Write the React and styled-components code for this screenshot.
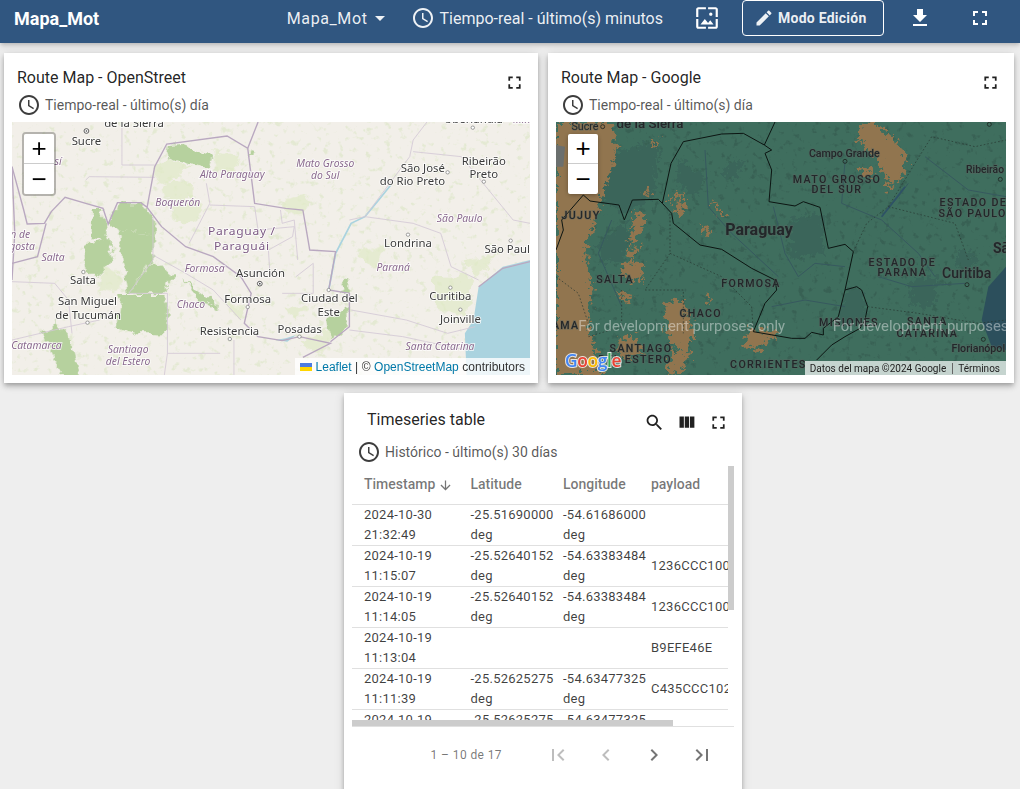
import styled, { createGlobalStyle } from "styled-components";

const GlobalStyle = createGlobalStyle`
  html, body {
    margin: 0;
    height: 100%;
    overflow: hidden;
    background: #eeeeee;
    font-family: Roboto, "Liberation Sans", sans-serif;
  }
`;

const ICONS = {
  clock:
    "M11.99 2C6.47 2 2 6.48 2 12s4.47 10 9.99 10C17.52 22 22 17.52 22 12S17.52 2 11.99 2zM12 20c-4.42 0-8-3.58-8-8s3.58-8 8-8 8 3.58 8 8-3.58 8-8 8zm.5-13H11v6l5.25 3.15.75-1.23-4.5-2.67z",
  dropdown: "M7 10l5 5 5-5z",
  wallpaper:
    "M4 4h7V2H4c-1.1 0-2 .9-2 2v7h2V4zm6 9l-4 5h12l-3-4-2.03 2.71L10 13zm7-4.5c0-.83-.67-1.5-1.5-1.5S14 7.67 14 8.5s.67 1.5 1.5 1.5S17 9.33 17 8.5zM20 2h-7v2h7v7h2V4c0-1.1-.9-2-2-2zm0 18h-7v2h7c1.1 0 2-.9 2-2v-7h-2v7zM4 13H2v7c0 1.1.9 2 2 2h7v-2H4v-7z",
  edit: "M3 17.25V21h3.75L17.81 9.94l-3.75-3.75L3 17.25zM20.71 7.04c.39-.39.39-1.02 0-1.41l-2.34-2.34c-.39-.39-1.02-.39-1.41 0l-1.83 1.83 3.75 3.75 1.83-1.83z",
  download: "M19 9h-4V3H9v6H5l7 7 7-7zM5 18v2h14v-2H5z",
  fullscreen:
    "M7 14H5v5h5v-2H7v-3zm-2-4h2V7h3V5H5v5zm12 7h-3v2h5v-5h-2v3zM14 5v2h3v3h2V5h-5z",
  search:
    "M15.5 14h-.79l-.28-.27C15.41 12.59 16 11.11 16 9.5 16 5.91 13.09 3 9.5 3S3 5.91 3 9.5 5.91 16 9.5 16c1.61 0 3.09-.59 4.23-1.57l.27.28v.79l5 4.99L20.49 19l-4.99-5zm-6 0C7.01 14 5 11.99 5 9.5S7.01 5 9.5 5 14 7.01 14 9.5 11.99 14 9.5 14z",
  columns: "M10 18h5V5h-5v13zm-6 0h5V5H4v13zM16 5v13h5V5h-5z",
  arrowDown:
    "M20 12l-1.41-1.41L13 16.17V4h-2v12.17l-5.58-5.59L4 12l8 8 8-8z",
  first: "M18.41 16.59L13.82 12l4.59-4.59L17 6l-6 6 6 6zM6 6h2v12H6z",
  prev: "M15.41 7.41L14 6l-6 6 6 6 1.41-1.41L10.83 12z",
  next: "M10 6L8.59 7.41 13.17 12l-4.58 4.59L10 18l6-6z",
  last: "M5.59 7.41L10.18 12l-4.59 4.59L7 18l6-6-6-6zM16 6h2v12h-2z",
};

const Icon = ({ name, size = 24 }) => (
  <svg width={size} height={size} viewBox="0 0 24 24" fill="currentColor">
    <path d={ICONS[name]} />
  </svg>
);

/* ---- map data, in the coordinates of the svg viewBox ---- */

const OSM_FOREST = [
  "M485,75 L530,72 L620,110 L610,145 L480,108Z",
  "M342,250 L412,250 L445,290 L445,340 L340,330 L320,312Z",
  "M270,270 L300,270 L315,360 L270,355Z",
  "M240,380 L320,350 L330,410 L290,470 L250,450Z",
  "M340,330 L445,340 L445,420 L375,520 L360,440Z",
  "M445,425 L500,470 L485,520 L375,520Z",
  "M350,525 L487,525 L487,640 L400,640 L340,620Z",
  "M530,480 L620,550 L640,575 L570,535Z",
  "M1000,490 L1020,475 L1020,515 L990,510Z",
  "M950,600 L1015,560 L1015,620 L960,650Z",
  "M125,640 L160,600 L200,640 L230,765 L180,765Z",
  "M720,90 L742,95 L728,108Z",
];

const OSM_LIGHT = [
  "M480,108 L560,140 L450,200 L452,145Z",
  "M470,180 L560,190 L560,240 L480,240Z",
  "M500,260 L590,240 L570,310 L510,310Z",
  "M620,90 L700,110 L680,170 L630,150Z",
  "M820,240 L900,220 L880,280 L830,290Z",
  "M300,440 L360,470 L340,520 L290,510Z",
  "M650,550 L720,570 L700,600Z",
  "M820,560 L900,560 L860,600Z",
  "M870,660 L980,620 L930,700Z",
  "M1260,470 L1380,470 L1350,600 L1260,560Z",
  "M1350,420 L1450,400 L1390,470Z",
  "M1040,400 L1120,370 L1090,450Z",
];

const OSM_BORDERS = [
  "M750,6 L720,85 L660,48 L485,72 L450,140 L428,262 L410,248 L342,248 L315,312 L300,265 L250,250 L190,232 L150,275 L130,310 L80,312 L70,270 L36,140",
  "M428,262 L470,320 L540,380 L620,410 L700,470 L730,520 L710,610 L750,650 L820,662 L870,650 L960,670 L880,712",
  "M720,85 L740,250 L830,265 L880,270 L900,390 L975,395 L955,510 L1015,520 L1015,620 L960,665",
  "M1539,425 L1460,445 L1390,500",
  "M36,430 L110,410 L135,310",
  "M36,140 L44,340 L36,480",
];

const OSM_STATES = [
  "M355,6 L355,135 L450,135",
  "M250,180 L260,170 L450,172",
  "M445,290 L445,420 L375,520 L487,520 L487,700 L640,700",
  "M445,405 L540,460 L620,510 L700,600",
  "M600,190 L610,250 L550,370",
  "M610,255 L740,260 L750,330 L855,320 L850,350 L780,390 L785,470",
  "M815,270 L820,310 L855,300 L865,420",
  "M1015,300 L1060,290 L1200,310 L1280,340 L1310,440 L1390,480",
  "M1060,290 L1110,220 L1190,110 L1200,60 L1240,6",
  "M1200,95 L1340,110 L1490,300 L1539,310",
  "M1020,570 L1180,600 L1300,640 L1380,620",
  "M1015,630 L1170,650 L1350,690",
  "M36,485 L160,490 L200,540 L210,640",
  "M290,600 L200,620 L36,660",
  "M820,520 L910,520 L910,430 L860,470",
  "M680,660 L680,765",
  "M487,700 L478,765",
];

const OSM_CITIES = [
  ["de la Sierra", 390, 20],
  ["Uberlândia", 1375, 8],
  ["Sucre", 252, 75],
  ["São José", 1228, 155],
  ["do Rio Preto", 1198, 195],
  ["Ribeirão", 1405, 134],
  ["Preto", 1405, 175],
  ["Londrina", 1185, 381],
  ["São Paul", 1473, 399],
  ["Salta", 242, 491],
  ["Asunción", 757, 472],
  ["Curitiba", 1308, 539],
  ["Formosa", 720, 548],
  ["Ciudad del", 957, 546],
  ["Este", 955, 588],
  ["San Miguel", 255, 556],
  ["de Tucumán", 257, 596],
  ["Joinville", 1337, 610],
  ["Resistencia", 667, 644],
  ["Posadas", 871, 638],
];

const OSM_REGIONS = [
  ["Min", 1515, 10],
  ["sí", 170, 135],
  ["Alto Paraguay", 675, 173],
  ["Mato Grosso", 945, 142],
  ["do Sul", 945, 178],
  ["Boquerón", 517, 258],
  ["São Paulo", 1335, 307],
  ["n de", 60, 353],
  ["gosta", 65, 389],
  ["Salta", 155, 423],
  ["Formosa", 595, 457],
  ["Paraná", 1142, 454],
  ["Chaco", 555, 564],
  ["Catamarca", 107, 686],
  ["Santiago", 373, 700],
  ["del Estero", 373, 735],
  ["Santa Catarina", 1278, 689],
];

const OSM_DOTS = [
  [1300, 157], [1405, 185], [1185, 344], [1483, 362], [243, 456], [720, 561],
  [955, 510], [1308, 503], [1337, 569], [255, 608], [668, 657], [870, 650], [1373, 23],
];

const GOOGLE_TAN = [
  "M33,6 L200,6 L215,90 L170,240 L120,390 L140,500 L130,640 L180,765 L33,765Z",
  "M950,10 L990,6 L1050,60 L1085,110 L1070,170 L1040,200 L1000,120 L940,60Z",
  "M270,280 L305,280 L285,340 L250,375Z",
  "M255,380 L285,380 L270,415 L250,410Z",
  "M235,420 L295,430 L290,490 L230,470Z",
  "M360,550 L415,535 L450,640 L420,700 L370,660Z",
  "M200,510 L270,530 L240,545Z",
  "M500,235 L545,290 L520,285Z",
  "M465,320 L495,320 L485,345 L465,340Z",
  "M390,250 L425,245 L410,285 L385,275Z",
  "M365,225 L385,235 L360,250Z",
  "M395,220 L415,225 L400,245Z",
  "M295,205 L315,210 L305,235Z",
  "M320,65 L342,68 L330,85Z",
  "M610,625 L700,640 L640,690 L600,680Z",
  "M480,520 L505,545 L490,545Z",
  "M220,660 L260,640 L300,700 L230,720Z",
  "M380,690 L440,700 L400,765 L370,760Z",
  "M940,140 L985,150 L960,180Z",
  "M1020,190 L1045,200 L1030,215Z",
];

const GOOGLE_DARK = [
  "M200,100 L340,60 L330,230 L240,280 L170,240Z",
  "M545,130 L600,120 L570,180 L530,170Z",
  "M730,300 L830,280 L840,400 L740,420Z",
  "M900,510 L950,505 L965,580 L900,640 L880,590Z",
  "M1090,480 L1180,470 L1170,560 L1100,560Z",
  "M160,370 L250,300 L240,420 L170,430Z",
  "M1240,390 L1300,400 L1280,450 L1240,440Z",
  "M400,120 L480,170 L450,230 L390,190Z",
];

const GOOGLE_BORDERS = [
  "M690,6 L658,75 L680,90 L660,100 L680,150 L672,245 L750,258 L775,245 L825,262 L850,385 L900,373 L925,395 L900,510 L935,500 L950,510 L968,560 L960,600 L945,625 L900,650 L860,675 L815,720",
  "M658,75 L595,40 L530,42 L415,65 L378,130 L352,250 L340,238 L262,240 L238,300 L222,255 L135,243 L115,225 L50,300 L55,330 L33,390",
  "M352,250 L380,280 L385,310 L465,375 L530,388 L620,445 L690,480 L695,510 L660,550 L625,635 L740,655 L780,655 L800,637 L835,645 L835,625 L880,590 L900,510",
];

const GOOGLE_DOTTED = [
  "M375,280 L375,400 L300,510 L415,510 L415,640",
  "M375,400 L530,470 L620,560 L625,635",
  "M33,470 L100,520 L135,625",
  "M925,395 L965,310 L1030,260 L1110,130 L1160,50 L1290,80 L1383,60",
  "M968,560 L1120,580 L1300,610 L1383,600",
  "M230,510 L230,620 L130,650",
  "M1030,260 L1230,310 L1270,420",
];

const GOOGLE_ROADS = [
  "M685,260 L720,400 L760,470 L810,430 L900,440",
  "M480,90 L490,260 L560,340 L700,470",
  "M900,124 L890,250 L1010,300 L1120,400 L1170,470",
  "M1140,110 L1270,210 L1383,230",
  "M1010,290 L1060,230 L1090,190",
  "M1000,470 L1100,500 L1260,490",
  "M200,300 L160,400 L230,560",
  "M680,560 L780,540 L900,560",
];

const GOOGLE_LABELS = [
  { text: "Sucre", x: 120, y: 30, size: 32 },
  { text: "de la Sierra", x: 315, y: 24, size: 40, weight: 500 },
  { text: "Campo Grande", x: 898, y: 110, size: 32, weight: 500 },
  { text: "MATO GROSSO", x: 876, y: 188, caps: true },
  { text: "DEL SUR", x: 876, y: 220, caps: true },
  { text: "Ribeirão", x: 1320, y: 160, size: 31, weight: 500 },
  { text: "ESTADO DE", x: 1285, y: 259, caps: true },
  { text: "SÃO PAULO", x: 1283, y: 292, caps: true },
  { text: "JUJUY", x: 108, y: 298, caps: true },
  { text: "Paraguay", x: 642, y: 345, size: 48, weight: 700 },
  { text: "Sã", x: 1368, y: 400, size: 42, weight: 700 },
  { text: "ESTADO DE", x: 1072, y: 437, caps: true },
  { text: "PARANÁ", x: 1072, y: 469, caps: true },
  { text: "Curitiba", x: 1265, y: 475, size: 42, weight: 500 },
  { text: "SALTA", x: 210, y: 490, caps: true },
  { text: "FORMOSA", x: 618, y: 502, caps: true },
  { text: "CHACO", x: 467, y: 592, caps: true },
  { text: "MISIONES", x: 912, y: 618, caps: true },
  { text: "SANTA", x: 1147, y: 616, caps: true },
  { text: "CATARINA", x: 1147, y: 652, caps: true },
  { text: "AMA", x: 62, y: 628, caps: true },
  { text: "SANTIAGO", x: 288, y: 697, caps: true },
  { text: "DEL ESTERO", x: 270, y: 730, caps: true },
  { text: "CORRIENTES", x: 670, y: 745, caps: true },
  { text: "Florianópol", x: 1300, y: 697, size: 32, weight: 500 },
];

const GOOGLE_RINGS = [[173, 20], [900, 124], [1366, 178], [1266, 494], [1315, 658], [1333, 13]];

const ROWS = [
  ["2024-10-30", "21:32:49", "-25.51690000", "-54.61686000", ""],
  ["2024-10-19", "11:15:07", "-25.52640152", "-54.63383484", "1236CCC1000000"],
  ["2024-10-19", "11:14:05", "-25.52640152", "-54.63383484", "1236CCC1000000"],
  ["2024-10-19", "11:13:04", "", "", "B9EFE46E"],
  ["2024-10-19", "11:11:39", "-25.52625275", "-54.63477325", "C435CCC1020000"],
  ["2024-10-19", "11:10:36", "-25.52625275", "-54.63477325", "C435CCC1020000"],
  ["2024-10-19", "11:09:33", "", "", "B9EFE46E"],
  ["2024-10-19", "11:08:12", "-25.52610000", "-54.63500000", "C435CCC1020000"],
  ["2024-10-19", "11:07:09", "-25.52610000", "-54.63500000", "C435CCC1020000"],
  ["2024-10-19", "11:06:02", "", "", "B9EFE46E"],
];

/* ---- small pieces ---- */

const Cell = ({ value, unit }) =>
  value ? (
    <>
      {value}
      <br />
      {unit}
    </>
  ) : null;

// wobbles the straight polygon edges so that land cover looks organic
const RoughFilter = ({ id, scale, frequency }) => (
  <filter id={id} x="-10%" y="-10%" width="120%" height="120%">
    <feTurbulence type="fractalNoise" baseFrequency={frequency} numOctaves="3" seed="4" />
    <feDisplacementMap in="SourceGraphic" scale={scale} xChannelSelector="R" yChannelSelector="G" />
  </filter>
);

// noise thresholded into blotches of one colour
const SpeckleFilter = ({ id, rgb, seed }) => (
  <filter id={id} x="0" y="0" width="1" height="1" colorInterpolationFilters="sRGB">
    <feTurbulence type="fractalNoise" baseFrequency="0.05" numOctaves="3" seed={seed} />
    <feColorMatrix values={`0 0 0 0 ${rgb[0]} 0 0 0 0 ${rgb[1]} 0 0 0 0 ${rgb[2]} 6 0 0 0 -3.6`} />
  </filter>
);

const OpenStreetMap = () => (
  <MapSvg viewBox="36 6 1503 759" preserveAspectRatio="none">
    <defs>
      <RoughFilter id="osm-rough" scale="40" frequency="0.03" />
      <SpeckleFilter id="osm-speckle" rgb={[0.8, 0.88, 0.68]} seed="8" />
    </defs>
    <rect x="36" y="6" width="1503" height="759" fill="#f2efe9" />
    <rect x="36" y="6" width="1503" height="759" fill="#000" filter="url(#osm-speckle)" opacity="0.35" />
    <g filter="url(#osm-rough)">
      {OSM_LIGHT.map((d) => (
        <path key={d} d={d} fill="#dfe9c6" opacity="0.7" />
      ))}
      {OSM_FOREST.map((d) => (
        <path key={d} d={d} fill="#b6d19e" />
      ))}
    </g>
    <path
      d="M1539,420 L1460,440 L1390,500 L1375,600 L1350,640 L1355,765 L1539,765Z"
      fill="#aad3df"
    />
    <path
      d="M955,510 L975,400 L1020,310 L1060,290 L1100,240 L1135,195"
      fill="none"
      stroke="#aad3df"
      strokeWidth="5"
    />
    <path d="M800,660 L830,655 L860,645 L835,665Z" fill="#aad3df" />
    {OSM_STATES.map((d) => (
      <path key={d} d={d} fill="none" stroke="#d3c8d6" strokeWidth="2.5" />
    ))}
    {OSM_BORDERS.map((d) => (
      <path key={d} d={d} fill="none" stroke="#b9a8c0" strokeWidth="4" />
    ))}
    {OSM_DOTS.map(([x, y]) => (
      <circle key={`${x}-${y}`} cx={x} cy={y} r="5" fill="#fff" stroke="#777" strokeWidth="2" />
    ))}
    <circle cx="252" cy="33" r="7" fill="#fff" stroke="#444" strokeWidth="2.5" />
    <circle cx="252" cy="33" r="2.5" fill="#444" />
    <circle cx="755" cy="491" r="7" fill="#fff" stroke="#444" strokeWidth="2.5" />
    <circle cx="755" cy="491" r="2.5" fill="#444" />
    {OSM_REGIONS.map(([text, x, y]) => (
      <RegionLabel key={`${text}-${x}`} x={x} y={y}>
        {text}
      </RegionLabel>
    ))}
    {OSM_CITIES.map(([text, x, y]) => (
      <CityLabel key={`${text}-${x}`} x={x} y={y}>
        {text}
      </CityLabel>
    ))}
    <CountryLabel x="703" y="345">Paraguay /</CountryLabel>
    <CountryLabel x="703" y="390">Paraguái</CountryLabel>
  </MapSvg>
);

const GoogleMap = () => (
  <MapSvg viewBox="33 6 1350 759" preserveAspectRatio="none">
    <defs>
      <RoughFilter id="google-rough" scale="55" frequency="0.07" />
      <SpeckleFilter id="google-speckle" rgb={[0.22, 0.38, 0.33]} seed="3" />
    </defs>
    <rect x="33" y="6" width="1350" height="759" fill="#3f6e5e" />
    <rect x="33" y="6" width="1350" height="759" fill="#000" filter="url(#google-speckle)" />
    <g filter="url(#google-rough)">
      {GOOGLE_DARK.map((d) => (
        <path key={d} d={d} fill="#3a655a" />
      ))}
      {GOOGLE_TAN.map((d) => (
        <path key={d} d={d} fill="#91754f" />
      ))}
    </g>
    <path d="M1383,440 L1330,500 L1310,600 L1340,680 L1383,690Z" fill="#2c4f5c" />
    <path d="M33,75 L60,80 L55,140 L33,140Z" fill="#6b6f6e" />
    {GOOGLE_ROADS.map((d) => (
      <path key={d} d={d} fill="none" stroke="#37595f" strokeWidth="3" />
    ))}
    <path d="M1010,290 L1080,200" fill="none" stroke="#2e5266" strokeWidth="5" />
    {GOOGLE_DOTTED.map((d) => (
      <path key={d} d={d} fill="none" stroke="#25352f" strokeWidth="2" strokeDasharray="5 6" />
    ))}
    {GOOGLE_BORDERS.map((d) => (
      <path key={d} d={d} fill="none" stroke="#0c1512" strokeWidth="3" />
    ))}
    {GOOGLE_RINGS.map(([x, y]) => (
      <circle key={x} cx={x} cy={y} r="6" fill="none" stroke="#1e2522" strokeWidth="2.5" />
    ))}
    {GOOGLE_LABELS.map((l) => (
      <GoogleLabel
        key={`${l.text}-${l.x}`}
        x={l.x}
        y={l.y}
        $caps={l.caps}
        $size={l.size}
        $weight={l.weight}
      >
        {l.text}
      </GoogleLabel>
    ))}
    <Watermark x="100" y="632">For development purposes only</Watermark>
    <Watermark x="863" y="632">For development purposes only</Watermark>
    <GoogleLogo x="60" y="741">
      <tspan fill="#4285f4">G</tspan>
      <tspan fill="#ea4335">o</tspan>
      <tspan fill="#fbbc05">o</tspan>
      <tspan fill="#4285f4">g</tspan>
      <tspan fill="#34a853">l</tspan>
      <tspan fill="#ea4335">e</tspan>
    </GoogleLogo>
  </MapSvg>
);

const ZoomControl = ({ plain }) => (
  <ZoomBox $plain={plain}>
    <ZoomButton>+</ZoomButton>
    <ZoomButton>−</ZoomButton>
  </ZoomBox>
);

const TimeInfo = ({ children }) => (
  <TimeRow>
    <Icon name="clock" />
    <span>{children}</span>
  </TimeRow>
);

export default function App() {
  return (
    <>
      <GlobalStyle />
      <TopBar>
        <Brand>Mapa_Mot</Brand>
        <StateSelect>
          Mapa_Mot
          <Icon name="dropdown" />
        </StateSelect>
        <TimeWindow>
          <Icon name="clock" />
          <span>Tiempo-real - último(s) minutos</span>
        </TimeWindow>
        <BarIcon $left={31}>
          <Icon name="wallpaper" size={26} />
        </BarIcon>
        <EditButton>
          <Icon name="edit" size={20} />
          Modo Edición
        </EditButton>
        <BarIcon $left={24}>
          <Icon name="download" />
        </BarIcon>
        <BarIcon $left={36}>
          <Icon name="fullscreen" />
        </BarIcon>
      </TopBar>

      <Dashboard>
        <MapRow>
          <Card $height={330}>
            <TitleRow $height={40}>
              <Title $top={13} $left={5}>Route Map - OpenStreet</Title>
              <CardActions>
                <CardAction>
                  <Icon name="fullscreen" size={21} />
                </CardAction>
              </CardActions>
            </TitleRow>
            <TimeInfo>Tiempo-real - último(s) día</TimeInfo>
            <MapFrame>
              <OpenStreetMap />
              <ZoomControl />
              <LeafletCredit>
                <svg width="12" height="8" viewBox="0 0 12 8">
                  <rect width="12" height="4" fill="#4c7be1" />
                  <rect y="4" width="12" height="4" fill="#ffd500" />
                </svg>
                <CreditLink>Leaflet</CreditLink>
                <span>|</span>
                <span>©</span>
                <CreditLink>OpenStreetMap</CreditLink>
                <span>contributors</span>
              </LeafletCredit>
            </MapFrame>
          </Card>

          <Card $height={330}>
            <TitleRow $height={40}>
              <Title $top={13} $left={5}>Route Map - Google</Title>
              <CardActions>
                <CardAction>
                  <Icon name="fullscreen" size={21} />
                </CardAction>
              </CardActions>
            </TitleRow>
            <TimeInfo>Tiempo-real - último(s) día</TimeInfo>
            <MapFrame>
              <GoogleMap />
              <ZoomControl plain />
              <GoogleCredit>
                <span>Datos del mapa ©2024 Google</span>
                <span>Términos</span>
              </GoogleCredit>
            </MapFrame>
          </Card>
        </MapRow>

        <TableCard $height={410}>
          <TitleRow $height={47}>
            <Title $top={15} $left={15}>Timeseries table</Title>
            <CardActions>
              <CardAction>
                <Icon name="search" size={21} />
              </CardAction>
              <CardAction>
                <Icon name="columns" size={21} />
              </CardAction>
              <CardAction>
                <Icon name="fullscreen" size={21} />
              </CardAction>
            </CardActions>
          </TitleRow>
          <TimeInfo>Histórico - último(s) 30 días</TimeInfo>
          <TableArea>
            <TableClip>
              <DataTable>
                <colgroup>
                  <col style={{ width: 113.5 }} />
                  <col style={{ width: 92.5 }} />
                  <col style={{ width: 88 }} />
                  <col style={{ width: 146 }} />
                </colgroup>
                <thead>
                  <tr>
                    <HeadCell $first>
                      <SortLabel>
                        Timestamp
                        <Icon name="arrowDown" size={15} />
                      </SortLabel>
                    </HeadCell>
                    <HeadCell>Latitude</HeadCell>
                    <HeadCell>Longitude</HeadCell>
                    <HeadCell>payload</HeadCell>
                  </tr>
                </thead>
                <tbody>
                  {ROWS.map((r) => (
                    <tr key={r[1]}>
                      <BodyCell $first>
                        {r[0]}
                        <br />
                        {r[1]}
                      </BodyCell>
                      <BodyCell>
                        <Cell value={r[2]} unit="deg" />
                      </BodyCell>
                      <BodyCell>
                        <Cell value={r[3]} unit="deg" />
                      </BodyCell>
                      <BodyCell>{r[4]}</BodyCell>
                    </tr>
                  ))}
                </tbody>
              </DataTable>
            </TableClip>
            <VerticalThumb />
            <HorizontalThumb />
          </TableArea>
          <Paginator>
            <PageRange>1 – 10 de 17</PageRange>
            <PageButton $disabled>
              <Icon name="first" />
            </PageButton>
            <PageButton $disabled>
              <Icon name="prev" />
            </PageButton>
            <PageButton>
              <Icon name="next" />
            </PageButton>
            <PageButton>
              <Icon name="last" />
            </PageButton>
          </Paginator>
        </TableCard>
      </Dashboard>
    </>
  );
}

/* ---- top bar ---- */

const TopBar = styled.header`
  position: relative;
  z-index: 2;
  box-sizing: border-box;
  display: flex;
  align-items: center;
  height: 43px;
  padding: 0 28px 7px 14px;
  background: #305680;
  color: #fff;
  box-shadow: 0 2px 4px -1px rgba(0, 0, 0, 0.2), 0 4px 5px rgba(0, 0, 0, 0.08);
`;

const Brand = styled.div`
  margin-right: auto;
  font-size: 18px;
  font-weight: 700;
`;

const StateSelect = styled.div`
  display: flex;
  align-items: center;
  font-size: 16px;
  letter-spacing: 0.6px;
  color: rgba(255, 255, 255, 0.92);
`;

const TimeWindow = styled.div`
  display: flex;
  align-items: center;
  gap: 5px;
  margin-left: 19px;
  font-size: 16px;
  color: rgba(255, 255, 255, 0.92);
`;

const BarIcon = styled.div`
  display: flex;
  margin-left: ${({ $left }) => $left}px;
`;

const EditButton = styled.div`
  box-sizing: border-box;
  display: flex;
  align-items: center;
  gap: 4px;
  width: 142px;
  height: 36px;
  margin-left: 22px;
  padding-left: 11px;
  border: 1px solid #fff;
  border-radius: 4px;
  font-size: 14px;
  font-weight: 700;
  letter-spacing: 0.25px;
  color: rgba(255, 255, 255, 0.92);
`;

/* ---- dashboard ---- */

const Dashboard = styled.main`
  display: flex;
  flex-direction: column;
  gap: 10px;
  padding: 10px 6px 0 4px;
`;

const MapRow = styled.div`
  display: grid;
  grid-template-columns: 534px 466px;
  gap: 10px;
`;

const Card = styled.section`
  box-sizing: border-box;
  display: flex;
  flex-direction: column;
  height: ${({ $height }) => $height}px;
  padding: 0 8px 8px;
  background: #fff;
  box-shadow: 0 2px 4px -1px rgba(0, 0, 0, 0.2), 0 4px 5px rgba(0, 0, 0, 0.14),
    0 1px 10px rgba(0, 0, 0, 0.12);
`;

const TableCard = styled(Card)`
  width: 398px;
  margin-left: 340px;
  padding-bottom: 0;
`;

const TitleRow = styled.div`
  display: flex;
  justify-content: space-between;
  height: ${({ $height }) => $height}px;
`;

const Title = styled.div`
  margin: ${({ $top }) => $top}px 0 0 ${({ $left }) => $left}px;
  font-size: 16px;
  line-height: 24px;
  color: rgba(0, 0, 0, 0.87);
`;

const CardActions = styled.div`
  display: flex;
  margin-top: 13px;
`;

const CardAction = styled.div`
  display: flex;
  align-items: center;
  justify-content: center;
  width: 32px;
  height: 32px;
  color: rgba(0, 0, 0, 0.87);
`;

const TimeRow = styled.div`
  display: flex;
  align-items: center;
  gap: 4px;
  height: 24px;
  margin: 0 0 5px 5px;
  font-size: 14px;
  color: rgba(0, 0, 0, 0.67);

  svg {
    color: rgba(0, 0, 0, 0.76);
  }

  ${TableCard} & {
    margin-bottom: 2px;
  }
`;

/* ---- maps ---- */

const MapFrame = styled.div`
  position: relative;
  flex: 1;
  overflow: hidden;
`;

const MapSvg = styled.svg`
  display: block;
  width: 100%;
  height: 100%;
  filter: blur(0.35px);
`;

const CityLabel = styled.text`
  font-family: "Noto Sans", sans-serif;
  font-size: 33px;
  text-anchor: middle;
  fill: #3a3a3a;
  stroke: rgba(255, 255, 255, 0.85);
  stroke-width: 5px;
  paint-order: stroke;
`;

const RegionLabel = styled(CityLabel)`
  font-size: 30px;
  font-style: italic;
  fill: #8a6a8e;
`;

const CountryLabel = styled(CityLabel)`
  font-size: 35px;
  letter-spacing: 2px;
  fill: #7c5a83;
`;

const GoogleLabel = styled.text`
  font-family: Roboto, sans-serif;
  font-size: ${({ $caps, $size }) => ($caps ? 32 : $size)}px;
  font-weight: ${({ $caps, $weight }) => ($caps ? 500 : $weight)};
  letter-spacing: ${({ $caps }) => ($caps ? "4px" : "0")};
  text-anchor: middle;
  fill: #23272a;
  stroke: rgba(90, 100, 95, 0.55);
  stroke-width: 4px;
  paint-order: stroke;
`;

const Watermark = styled.text`
  font-family: Roboto, sans-serif;
  font-size: 44.5px;
  fill: rgba(255, 255, 255, 0.42);
`;

const GoogleLogo = styled.text`
  font-family: "Open Sans", sans-serif;
  font-size: 52px;
  font-weight: 600;
  letter-spacing: -1px;
  stroke: rgba(255, 255, 255, 0.8);
  stroke-width: 6px;
  paint-order: stroke;
`;

const ZoomBox = styled.div`
  position: absolute;
  top: ${({ $plain }) => ($plain ? 12 : 10)}px;
  left: ${({ $plain }) => ($plain ? 12 : 10)}px;
  display: flex;
  flex-direction: column;
  border: ${({ $plain }) => ($plain ? "none" : "2px solid rgba(0, 0, 0, 0.25)")};
  border-radius: 4px;
  background-clip: padding-box;
  box-shadow: ${({ $plain }) => ($plain ? "0 1px 4px rgba(0, 0, 0, 0.3)" : "none")};
`;

const ZoomButton = styled.div`
  box-sizing: border-box;
  display: flex;
  align-items: center;
  justify-content: center;
  width: 30px;
  height: 30px;
  background: #fff;
  font-family: "Liberation Sans", sans-serif;
  font-size: 26px;
  color: #000;

  &:first-child {
    border-bottom: 1px solid #ccc;
    border-radius: 2px 2px 0 0;
  }

  &:last-child {
    border-radius: 0 0 2px 2px;
  }
`;

const LeafletCredit = styled.div`
  position: absolute;
  right: 0;
  bottom: 0;
  display: flex;
  align-items: center;
  gap: 3.5px;
  height: 17px;
  padding: 0 5px;
  background: rgba(255, 255, 255, 0.8);
  font-family: "Liberation Sans", sans-serif;
  font-size: 12px;
  color: #333;
`;

const CreditLink = styled.span`
  color: #0078a8;
`;

const GoogleCredit = styled.div`
  position: absolute;
  right: 0;
  bottom: 0;
  display: flex;
  align-items: center;
  height: 14px;
  background: rgba(255, 255, 255, 0.7);
  font-size: 10px;
  color: #222;

  span {
    padding: 0 6px 0 5px;
  }

  span + span {
    border-left: 1px solid #666;
  }
`;

/* ---- table ---- */

const TableArea = styled.div`
  position: relative;
  height: 260px;
`;

const TableClip = styled.div`
  width: 376px;
  height: 254px;
  overflow: hidden;
`;

const VerticalThumb = styled.div`
  position: absolute;
  top: 0;
  right: 0;
  width: 6px;
  height: 144px;
  background: #cccccc;
`;

const HorizontalThumb = styled.div`
  position: absolute;
  left: 0;
  bottom: 0;
  width: 321px;
  height: 6px;
  background: #cccccc;
`;

const DataTable = styled.table`
  width: 440px;
  table-layout: fixed;
  border-collapse: separate;
  border-spacing: 0;
`;

const HeadCell = styled.th`
  box-sizing: border-box;
  height: 39px;
  padding: 0 0 2px ${({ $first }) => ($first ? "12px" : "5px")};
  border-bottom: 1px solid rgba(0, 0, 0, 0.12);
  font-size: 14px;
  font-weight: 500;
  text-align: left;
  color: rgba(0, 0, 0, 0.54);
`;

const SortLabel = styled.span`
  display: flex;
  align-items: center;
  gap: 3px;

  svg {
    margin-top: 2px;
  }
`;

const BodyCell = styled.td`
  box-sizing: border-box;
  height: 41px;
  padding: 0 0 0 ${({ $first }) => ($first ? "12px" : "5px")};
  border-bottom: 1px solid rgba(0, 0, 0, 0.12);
  font-size: 13px;
  line-height: 20px;
  letter-spacing: 0.25px;
  white-space: nowrap;
  color: rgba(0, 0, 0, 0.76);
`;

const Paginator = styled.footer`
  display: flex;
  align-items: center;
  justify-content: flex-end;
  height: 56px;
  padding-right: 8px;
  border-top: 1px solid rgba(0, 0, 0, 0.12);
`;

const PageRange = styled.div`
  margin-right: 32px;
  font-size: 12px;
  letter-spacing: 0.4px;
  color: rgba(0, 0, 0, 0.54);
`;

const PageButton = styled.div`
  display: flex;
  align-items: center;
  justify-content: center;
  width: 48px;
  color: ${({ $disabled }) => ($disabled ? "rgba(0, 0, 0, 0.26)" : "rgba(0, 0, 0, 0.54)")};
`;
